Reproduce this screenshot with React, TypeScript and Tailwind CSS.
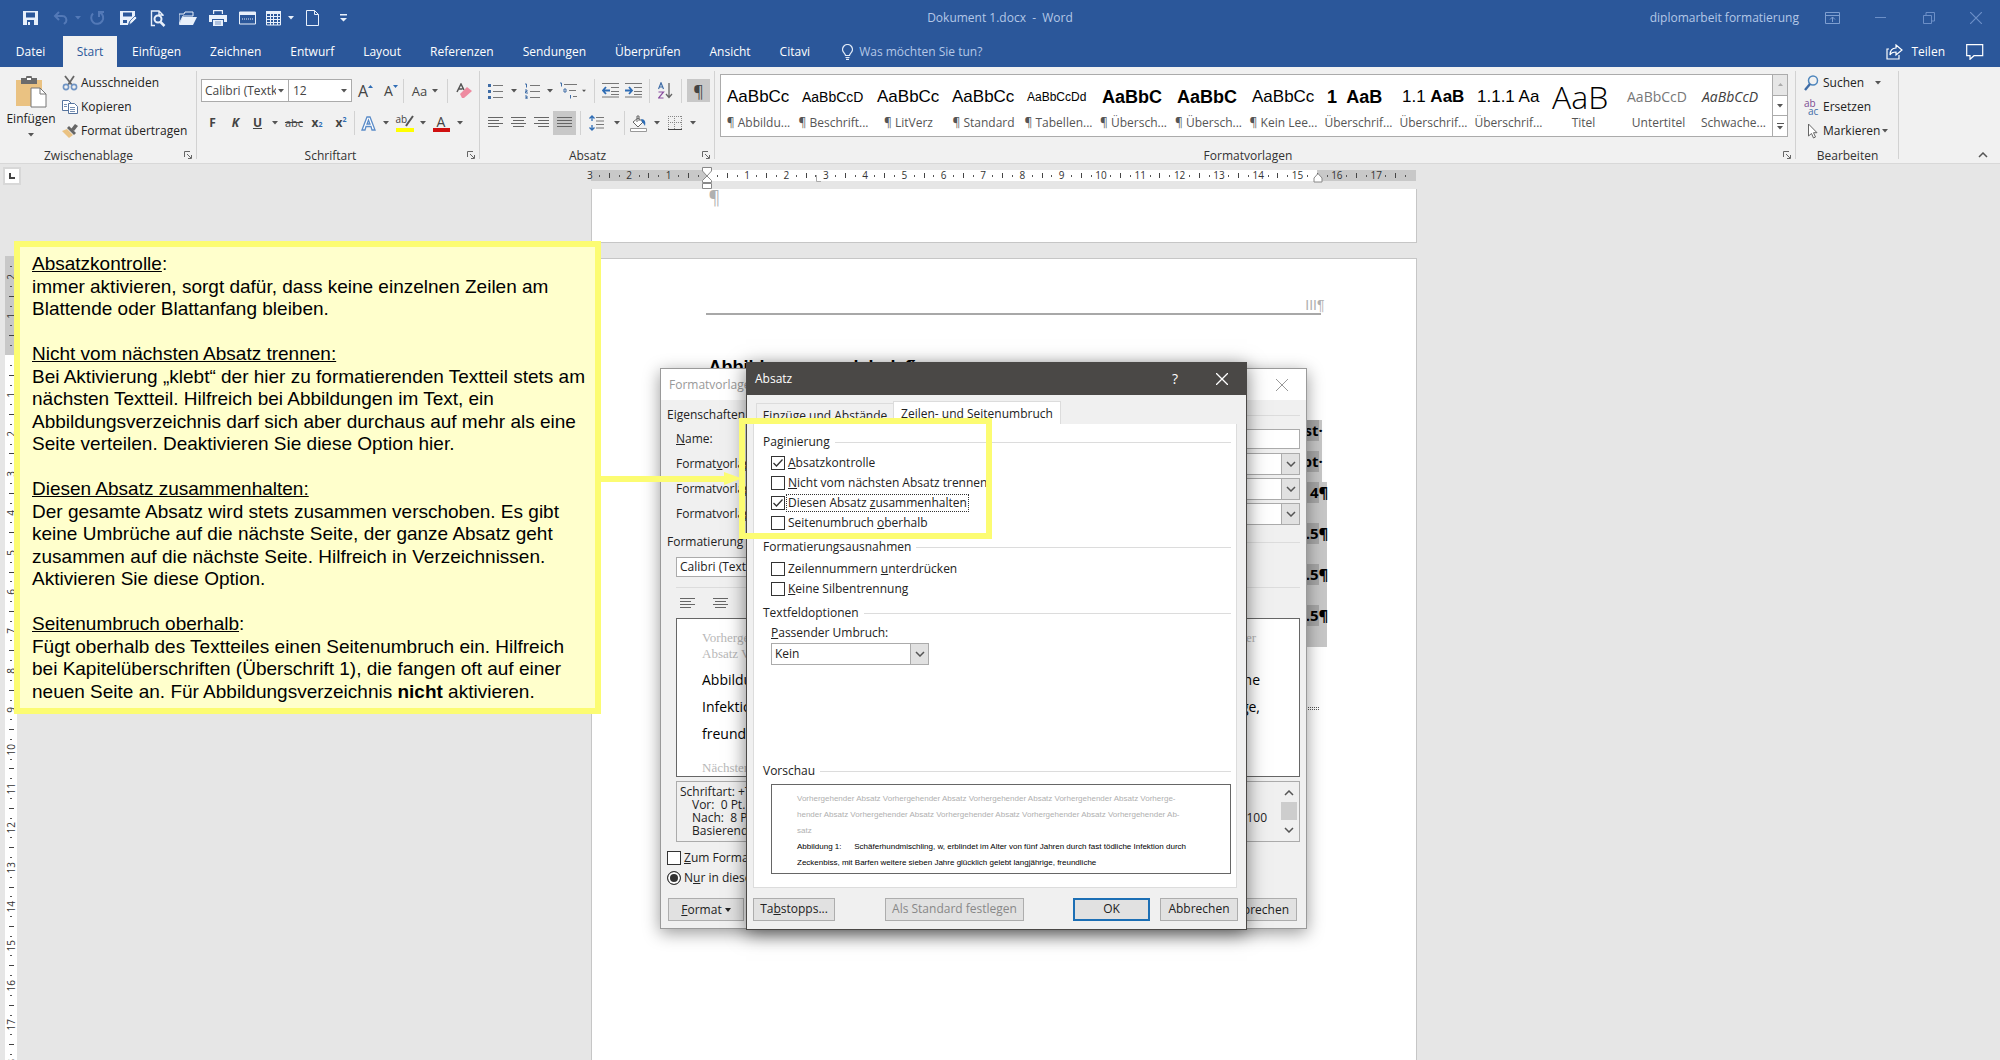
import { useState, ReactNode } from 'react';

type Tick = { key: number; label: string | null; kind: 'number' | 'dot' | 'bar' | 'zero' };

const TABS = ['Einfügen', 'Zeichnen', 'Entwurf', 'Layout', 'Referenzen', 'Sendungen', 'Überprüfen', 'Ansicht', 'Citavi'];

const STYLES = [
  { sample: 'AaBbCc', name: '¶ Abbildu...', cls: "text-black font-['Liberation_Sans'] text-[17px]" },
  { sample: 'AaBbCcD', name: '¶ Beschrift...', cls: "text-black font-['Liberation_Sans'] text-[14px]" },
  { sample: 'AaBbCc', name: '¶ LitVerz', cls: "text-black font-['Liberation_Sans'] text-[17px]" },
  { sample: 'AaBbCc', name: '¶ Standard', cls: "text-black font-['Liberation_Sans'] text-[17px]" },
  { sample: 'AaBbCcDd', name: '¶ Tabellen...', cls: "text-black font-['Liberation_Sans'] text-[12px]" },
  { sample: 'AaBbC', name: '¶ Übersch...', cls: "text-black font-['Liberation_Sans'] text-[18px] font-bold" },
  { sample: 'AaBbC', name: '¶ Übersch...', cls: "text-black font-['Liberation_Sans'] text-[18px] font-bold" },
  { sample: 'AaBbCc', name: '¶ Kein Lee...', cls: "text-black font-['Liberation_Sans'] text-[17px]" },
  { sample: '1  AaB', name: 'Überschrif...', cls: "text-black font-['Liberation_Sans'] text-[18px] font-bold" },
  { sample: '1.1 AaB', name: 'Überschrif...', cls: "text-black font-['Liberation_Sans'] text-[17px]", boldTail: true },
  { sample: '1.1.1 Aa', name: 'Überschrif...', cls: "text-black font-['Liberation_Sans'] text-[17px]" },
  { sample: 'AaB', name: 'Titel', cls: "text-black text-[32px] font-light" },
  { sample: 'AaBbCcD', name: 'Untertitel', cls: 'text-[#777] text-[14px]' },
  { sample: 'AaBbCcD', name: 'Schwache...', cls: 'text-[#404040] text-[14px] italic' }
];

// four marks per centimetre: number, dot, bar, dot
function ticks(from: number, to: number): Tick[] {
  const out: Tick[] = [];
  for (let i = from; i <= to; i++) {
    const q = ((i % 4) + 4) % 4;
    if (i === 0) out.push({ key: i, label: null, kind: 'zero' });
    else if (q === 0) out.push({ key: i, label: String(Math.abs(i / 4)), kind: 'number' });
    else out.push({ key: i, label: null, kind: q === 2 ? 'bar' : 'dot' });
  }
  return out;
}

function Caret({ className = 'w-2' }: { className?: string }) {
  return (
    <span className={`flex justify-center ${className}`}>
      <svg width="6" height="4" viewBox="0 0 6 4"><path d="M0 0h6L3 3.5z" fill="#555" /></svg>
    </span>
  );
}

function Sep() {
  return <span className="w-px h-6 bg-[#d2d2d2]" />;
}

function Tool({ label, className = '', children }: { label: string; className?: string; children: ReactNode }) {
  return (
    <button type="button" aria-label={label} className={`h-full flex items-center justify-center text-[#444] ${className}`}>
      {children}
    </button>
  );
}

function Launcher() {
  return (
    <button type="button" aria-label="Dialogfeld öffnen" className="absolute right-1 bottom-[3px] p-px">
      <svg width="8" height="8" viewBox="0 0 8 8" fill="none" stroke="#666"><path d="M.5 6V.5H6M3 3l4 4M7.500 4v3.500H4" /></svg>
    </button>
  );
}

function Group({ label, className, launcher = true, children }: { label: string; className: string; launcher?: boolean; children: ReactNode }) {
  return (
    <section aria-label={label} className={`relative flex flex-col shrink-0 ${className}`}>
      <div className="flex-1">{children}</div>
      <div className={`h-[14px] leading-[14px] text-center text-[#333] ${launcher ? 'pr-5' : ''}`}>{label}</div>
      {launcher && <Launcher />}
      <span className="absolute right-0 top-1 bottom-1 w-px bg-[#d2d2d2]" />
    </section>
  );
}

function Lines({ rows, color = '#666' }: { rows: [number, number][]; color?: string }) {
  return (
    <svg width="16" height="14" viewBox="0 0 16 14" stroke={color}>
      {rows.map(([a, b], i) => <path key={i} d={`M${a} ${i * 3 + 1.5}H${b}`} />)}
    </svg>
  );
}

function AlignIcon({ kind }: { kind: 'left' | 'center' | 'right' | 'justify' }) {
  const rows: Record<string, [number, number][]> = {
    left: [[0, 15], [0, 11], [0, 15], [0, 11]],
    center: [[0, 15], [2, 13], [0, 15], [2, 13]],
    right: [[0, 15], [4, 15], [0, 15], [4, 15]],
    justify: [[0, 15], [0, 15], [0, 15], [0, 15]]
  };
  return <Lines rows={rows[kind]} />;
}

function TitleBar() {
  return (
    <header className="grid grid-cols-3 items-center h-9 text-[#b4c7e7]">
      <div className="flex items-center pl-[23px] text-white">
        <button type="button" aria-label="Speichern" className="w-[30px]">
          <svg width="16" height="16" viewBox="0 0 16 16"><path d="M0 1h15v14H0zM3 2.500v5h9v-5zM4 10v5h7v-5z" fill="#e8f0fb" fillRule="evenodd" /><path d="M5 12h2v3H5z" fill="#e8f0fb" /></svg>
        </button>
        <button type="button" aria-label="Rückgängig" className="w-[37px] flex items-center gap-[6px]">
          <svg width="16" height="14" viewBox="0 0 16 14" fill="none" stroke="#5379b7" strokeWidth="2"><path d="M6 1L2 5l4 4M2 5h7c4 0 5 3 4 6l-2 2" /></svg>
          <svg width="6" height="4" viewBox="0 0 6 4"><path d="M0 0h6L3 3.500z" fill="#5379b7" /></svg>
        </button>
        <button type="button" aria-label="Wiederholen" className="w-[30px]">
          <svg width="15" height="16" viewBox="0 0 15 16" fill="none" stroke="#5379b7" strokeWidth="2"><path d="M3 3.500a6 6 0 1 0 7-1M9 7V2h5" /></svg>
        </button>
        <button type="button" aria-label="Speichern unter" className="w-[30px]">
          <svg width="17" height="16" viewBox="0 0 17 16"><path d="M0 1h15v5l-6 6-1 3H0zM3 2.500v4h9v-4z" fill="#e8f0fb" fillRule="evenodd" /><path d="M9 15l1-4 5-5 2 2-5 5z" fill="#e8f0fb" stroke="#2b579a" strokeWidth=".7" /><path d="M3 10h4v3H3z" fill="#2b579a" /></svg>
        </button>
        <button type="button" aria-label="Seitenansicht" className="w-[29px]">
          <svg width="16" height="17" viewBox="0 0 16 17" fill="none" stroke="#e8f0fb" strokeWidth="1.400"><path d="M5 15.500H1.500V1H9l4 4v1M9 1v4h4" /><circle cx="8" cy="9" r="3.500" fill="#2b579a" strokeWidth="2" /><path d="M10.500 12l4 4" strokeWidth="2.500" /></svg>
        </button>
        <button type="button" aria-label="Öffnen" className="w-[30px]">
          <svg width="18" height="15" viewBox="0 0 18 15"><path d="M0 13V3h5l1-2h8v4H4z" fill="none" stroke="#e8f0fb" /><path d="M3.500 6H18l-4 8H0z" fill="#e8f0fb" /></svg>
        </button>
        <button type="button" aria-label="Drucken" className="w-[30px]">
          <svg width="18" height="16" viewBox="0 0 18 16"><path d="M4 0h10v4H4zM0 5h18v7h-3V9H3v3H0zM4 10h10v6H4z" fill="#e8f0fb" /><path d="M5.500 1.500h7V4h-7zM6 12h6M6 14h6" fill="#2b579a" stroke="#2b579a" strokeWidth=".6" /></svg>
        </button>
        <button type="button" aria-label="Textfeld" className="w-[27px]">
          <svg width="17" height="14" viewBox="0 0 17 14"><path d="M.5 1v12h16V1z" fill="none" stroke="#e8f0fb" /><path d="M0 1h17v3H0z" fill="#e8f0fb" /><path d="M3 8h12" stroke="#e8f0fb" strokeDasharray="1 1" /></svg>
        </button>
        <button type="button" aria-label="Tabelle" className="w-[40px] flex items-center gap-[7px]">
          <svg width="15" height="15" viewBox="0 0 15 15"><path d="M.5 1v13h14V1zM0 5.500h15M0 8.500h15M0 11.500h15M4.500 2v12M7.500 2v12M11.500 2v12" fill="none" stroke="#e8f0fb" /><path d="M0 0h15v3H0z" fill="#e8f0fb" /></svg>
          <svg width="6" height="4" viewBox="0 0 6 4"><path d="M0 0h6L3 3.500z" fill="#e8f0fb" /></svg>
        </button>
        <button type="button" aria-label="Neu" className="w-[34px]">
          <svg width="13" height="16" viewBox="0 0 13 16" fill="none" stroke="#e8f0fb"><path d="M.5.5h8l4 4v11H.5zM8.500.5v4h4" /></svg>
        </button>
        <button type="button" aria-label="Symbolleiste anpassen">
          <svg width="7" height="8" viewBox="0 0 7 8"><path d="M0 0h7v1.500H0zM0 4h7L3.500 7.500z" fill="#e8f0fb" /></svg>
        </button>
      </div>
      <div className="text-center whitespace-pre">Dokument 1.docx  -  Word</div>
      <div className="flex items-center justify-end pr-[18px]">
        <span className="pr-[26px]">diplomarbeit formatierung</span>
        <button type="button" aria-label="Menüband-Anzeigeoptionen" className="w-[50px]">
          <svg width="15" height="12" viewBox="0 0 15 12" fill="none" stroke="#7f9fd0"><path d="M.5.5h14v11H.5zM0 3.500h15M7.500 10V5M5 7.500L7.500 5 10 7.500" /></svg>
        </button>
        <button type="button" aria-label="Minimieren" className="w-[48px]">
          <svg width="11" height="2" viewBox="0 0 11 2"><path d="M0 0h11v1H0z" fill="#6c8fc7" /></svg>
        </button>
        <button type="button" aria-label="Verkleinern" className="w-[47px]">
          <svg width="12" height="12" viewBox="0 0 12 12" fill="none" stroke="#6c8fc7"><path d="M.5 3.500h8v8h-8zM3 3V.5h8.500V9H9" /></svg>
        </button>
        <button type="button" aria-label="Schließen">
          <svg width="12" height="12" viewBox="0 0 12 12" fill="none" stroke="#6c8fc7" strokeWidth="1.200"><path d="M0 0l12 12M12 0L0 12" /></svg>
        </button>
      </div>
    </header>
  );
}

function TabBar() {
  return (
    <nav className="flex items-stretch h-[31px] pl-[2px] text-white">
      <button type="button" className="w-[61px] pr-1">Datei</button>
      <button type="button" className="w-[54px] bg-[#f1f1f1] text-[#2b579a]">Start</button>
      {TABS.map(t => <button type="button" key={t} className="pl-[15px] pr-[14px]">{t}</button>)}
      <div className="flex items-center gap-[6px] pl-[18px] text-[#b4c7e7]">
        <svg width="11" height="16" viewBox="0 0 11 16" fill="none" stroke="#dfe9f7" strokeWidth="1.200"><path d="M3.500 11.500c0-2-3-3-3-6a5 5 0 0 1 10 0c0 3-3 4-3 6zM3.500 13.500h4M4 15.300h3" /></svg>
        <span>Was möchten Sie tun?</span>
      </div>
      <div className="flex items-center ml-auto pr-4 gap-[21px]">
        <button type="button" className="flex items-center gap-2">
          <svg width="17" height="16" viewBox="0 0 17 16" fill="none" stroke="#fff" strokeWidth="1.200"><path d="M3 5H1v10h12v-4M10 1l6 5-6 5V8c-3 0-5 1-6 3 0-4 2-7 6-7z" /></svg>
          Teilen
        </button>
        <button type="button" aria-label="Kommentare">
          <svg width="18" height="16" viewBox="0 0 18 16" fill="none" stroke="#fff" strokeWidth="1.200"><path d="M.7.700h16v11H8l-4 3.600v-3.600H.7z" /></svg>
        </button>
      </div>
    </nav>
  );
}

function ClipboardGroup() {
  return (
    <Group label="Zwischenablage" className="w-[197px]">
      <div className="flex pt-1">
        <button type="button" className="flex flex-col items-center shrink-0 w-[62px] pt-[5px]">
          <svg width="31" height="32" viewBox="0 0 31 32"><path d="M0 4h26v26H0z" fill="#eac282" /><path d="M5 2h5a3 3 0 0 1 6 0h5v6H5z" fill="#6b6b6b" /><path d="M11 3h4" stroke="#fff" strokeWidth="2" /><path d="M15 12h9l6 6v13H15z" fill="#fff" stroke="#777" /><path d="M24 12v6h6" fill="none" stroke="#777" /></svg>
          <span className="leading-4 pt-[3px]">Einfügen</span>
          <Caret className="w-2 pt-[6px]" />
        </button>
        <div className="flex flex-col whitespace-nowrap">
          <button type="button" className="flex items-center gap-[3px] h-6">
            <svg width="16" height="16" viewBox="0 0 16 16" fill="none"><path d="M3 1l7 9M12 1L6 10" stroke="#666" strokeWidth="1.800" /><circle cx="4" cy="12" r="2.600" stroke="#6f94c4" strokeWidth="1.600" /><circle cx="12" cy="12" r="2.600" stroke="#6f94c4" strokeWidth="1.600" /></svg>
            Ausschneiden
          </button>
          <button type="button" className="flex items-center gap-[3px] h-6">
            <svg width="16" height="14" viewBox="0 0 16 14" stroke="#56749e"><path d="M.5.5h6l3 3v7h-9z" fill="#fff" /><path d="M6.500 3.500h6l3 3v7h-9z" fill="#fff" /><path d="M2 4.500h3M2 6.500h3M8 7.500h5M8 9.500h5M8 11.500h5" strokeWidth=".8" /></svg>
            Kopieren
          </button>
          <button type="button" className="flex items-center gap-[3px] h-6">
            <svg width="16" height="15" viewBox="0 0 16 15"><path d="M0 7l5-2 6 6-4 3z" fill="#eac282" /><path d="M5 4l2-2 7 7-2 2z" fill="#666" /><path d="M9 5l4-5 3 2-4 5z" fill="#666" /></svg>
            Format übertragen
          </button>
        </div>
      </div>
    </Group>
  );
}

function FontGroup() {
  return (
    <Group label="Schriftart" className="w-[283px] pl-1">
      <div className="flex items-center h-[23px] mt-3">
        <div className="relative w-[88px] h-full">
          <select aria-label="Schriftart" className="appearance-none w-full h-full border border-[#ababab] bg-white pl-[3px] pr-3 text-[#444]">
            <option>Calibri (Textkörper)</option>
          </select>
          <span className="absolute right-1 top-[10px] pointer-events-none"><Caret /></span>
        </div>
        <div className="relative w-[63px] h-full">
          <select aria-label="Schriftgrad" className="appearance-none w-full h-full border border-l-0 border-[#ababab] bg-white pl-1 pr-4 text-[#444]">
            <option>12</option>
          </select>
          <span className="absolute right-1 top-[10px] pointer-events-none"><Caret /></span>
        </div>
        <Tool label="Schrift vergrößern" className="w-[27px]">
          <span className="text-base">A</span>
          <svg width="5" height="12" viewBox="0 0 5 12"><path d="M0 3L2.500 0 5 3z" fill="#2f6db5" /></svg>
        </Tool>
        <Tool label="Schrift verkleinern" className="w-6">
          <span className="text-sm">A</span>
          <svg width="5" height="12" viewBox="0 0 5 12"><path d="M0 0h5L2.500 3z" fill="#2f6db5" /></svg>
        </Tool>
        <Sep />
        <Tool label="Groß-/Kleinschreibung" className="w-[43px] gap-1"><span className="text-[13px]">Aa</span><Caret /></Tool>
        <Sep />
        <Tool label="Formatierung löschen" className="w-8">
          <svg width="17" height="16" viewBox="0 0 17 16"><path d="M1 9L5 1l3 6M2.500 6h4" fill="none" stroke="#555" strokeWidth="1.500" /><path d="M4 11l7-7 5 4-8 7H6z" fill="#ee8ba0" /></svg>
        </Tool>
      </div>
      <div className="flex items-center h-6 mt-[9px]">
        <Tool label="Fett" className="w-[23px] font-bold">F</Tool>
        <Tool label="Kursiv" className="w-[23px] font-bold italic">K</Tool>
        <Tool label="Unterstrichen" className="w-[21px] font-bold underline">U</Tool>
        <Caret className="w-[14px]" />
        <Tool label="Durchgestrichen" className="w-6 text-[11px] line-through">abc</Tool>
        <Tool label="Tiefgestellt" className="w-[22px] font-bold">x<sub className="text-[7px] text-[#2f6db5]">2</sub></Tool>
        <Tool label="Hochgestellt" className="w-[26px] font-bold">x<sup className="text-[7px] text-[#2f6db5]">2</sup></Tool>
        <Sep />
        <Tool label="Texteffekte" className="w-[27px]">
          <svg width="15" height="15" viewBox="0 0 15 15" fill="#fff" stroke="#5b8cc8" strokeWidth="1.300"><path d="M1 14L6 1h3l5 13h-3l-1-3.500H5L4 14zM6 8h3L7.500 4z" /></svg>
        </Tool>
        <Caret />
        <Tool label="Texthervorhebungsfarbe" className="w-[29px]">
          <span className="relative flex h-[18px] w-[18px] border-b-4 border-[#ffff00] text-[10px] leading-[11px]">ab
            <svg className="absolute right-0 top-0" width="9" height="13" viewBox="0 0 9 13"><path d="M8 2L3 9l-2 3" stroke="#555" strokeWidth="2" /></svg>
          </span>
        </Tool>
        <Caret />
        <Tool label="Schriftfarbe" className="w-7">
          <span className="h-[17px] w-[17px] border-b-4 border-[#d01010] text-center text-sm leading-[13px]">A</span>
        </Tool>
        <Caret className="w-[10px]" />
      </div>
    </Group>
  );
}

function ParagraphGroup() {
  return (
    <Group label="Absatz" className="w-[235px]">
      <div className="flex items-center h-[23px] mt-3">
        <Tool label="Aufzählungszeichen" className="w-[30px]">
          <svg width="15" height="16" viewBox="0 0 15 16"><path d="M5 2.500h10M5 8.500h10M5 14.500h10" stroke="#777" /><path d="M0 1h3v3H0zM0 7h3v3H0zM0 13h3v3H0z" fill="#3f6ca6" /></svg>
        </Tool>
        <Caret />
        <Tool label="Nummerierung" className="w-7">
          <svg width="15" height="16" viewBox="0 0 15 16"><path d="M5 2.500h10M5 8.500h10M5 14.500h10" stroke="#777" /><path d="M0 1h1.500v3.500M0 7h2v1.500H.5V10H3M0 13h2v3H0M.5 14.500H2" fill="none" stroke="#3f6ca6" /></svg>
        </Tool>
        <Caret />
        <Tool label="Liste mit mehreren Ebenen" className="w-7">
          <svg width="17" height="17" viewBox="0 0 17 17"><path d="M4 2.500h13M9 8.500h7M13 14.500h4" stroke="#777" /><path d="M0 1h1.500v3.500M4 7h2v3H4zM10.500 13v3.500" fill="none" stroke="#3f6ca6" /></svg>
        </Tool>
        <Caret className="w-[12px] pr-2" />
        <Sep />
        <Tool label="Einzug verkleinern" className="w-[30px]">
          <svg width="17" height="15" viewBox="0 0 17 15"><path d="M0 .5h17M9 4.500h8M9 8.500h8M0 14h17M9 11.500h8" stroke="#777" /><path d="M8 7.500H1M4 4L1 7.500 4 11" fill="none" stroke="#2f6db5" strokeWidth="1.800" /></svg>
        </Tool>
        <Tool label="Einzug vergrößern" className="w-6 pr-2">
          <svg width="17" height="15" viewBox="0 0 17 15" className="shrink-0"><path d="M0 .5h17M9 4.500h8M9 8.500h8M0 14h17M9 11.500h8" stroke="#777" /><path d="M0 7.500h7M4 4l3 3.500L4 11" fill="none" stroke="#2f6db5" strokeWidth="1.800" /></svg>
        </Tool>
        <Sep />
        <Tool label="Sortieren" className="w-[31px]">
          <svg width="15" height="17" viewBox="0 0 15 17" fill="none"><path d="M.5 7L3 .8 5.500 7M1.500 5h3" stroke="#3f6ca6" strokeWidth="1.200" /><path d="M.5 10h5L.5 16h5" stroke="#8a4ea0" strokeWidth="1.200" /><path d="M11 1v14M8 12l3 3.500 3-3.500" stroke="#666" strokeWidth="1.300" /></svg>
        </Tool>
        <Sep />
        <Tool label="Alle anzeigen" className="w-[23px] ml-[5px] bg-[#c8c8c8] text-base">¶</Tool>
      </div>
      <div className="flex items-center h-6 mt-[9px] pl-1">
        <Tool label="Linksbündig" className="w-[23px]"><AlignIcon kind="left" /></Tool>
        <Tool label="Zentriert" className="w-[23px]"><AlignIcon kind="center" /></Tool>
        <Tool label="Rechtsbündig" className="w-[23px]"><AlignIcon kind="right" /></Tool>
        <Tool label="Blocksatz" className="w-[23px] mr-1 bg-[#c8c8c8]"><AlignIcon kind="justify" /></Tool>
        <Sep />
        <Tool label="Zeilenabstand" className="w-8">
          <svg width="16" height="16" viewBox="0 0 16 16" fill="none"><path d="M7 2.500h8M7 6h8M7 9.500h8M7 13h8" stroke="#777" /><path d="M3 1v5M3 10v5M.5 3.500L3 1l2.500 2.500M.5 12.500L3 15l2.500-2.500" stroke="#2f6db5" strokeWidth="1.300" /></svg>
        </Tool>
        <Caret className="w-[11px] pr-[3px]" />
        <Sep />
        <Tool label="Schattierung" className="w-7">
          <svg width="18" height="17" viewBox="0 0 18 17"><path d="M3 7l5-4 5 4-5 5z" fill="#fff" stroke="#666" /><path d="M7 7V1h2v5" fill="none" stroke="#666" /><path d="M11 4c4 0 5 3 4 7-1-2-2-3-3-4z" fill="#2f6db5" /><path d="M.5 13.500h16v3H.5z" fill="#fff" stroke="#999" /></svg>
        </Tool>
        <Caret />
        <Tool label="Rahmen" className="w-7">
          <svg width="14" height="14" viewBox="0 0 14 14" fill="none" stroke="#888" strokeDasharray="1 1"><path d="M.5 0v13M13.500 0v13M0 .5h14M6.500 0v13M0 6.500h14" /><path d="M0 13.500h14" stroke="#444" strokeDasharray="none" /></svg>
        </Tool>
        <Caret />
      </div>
    </Group>
  );
}

function StylesGroup() {
  return (
    <Group label="Formatvorlagen" className="w-[1081px] pl-[5px]">
      <div className="flex h-[63px] mt-[7px] mr-2 border border-[#ababab] bg-white">
        <div className="flex flex-1">
          {STYLES.map((s, i) => (
            <button type="button" key={i} className="flex flex-col w-[75px] px-[6px]">
              <span className={`flex items-center h-[44px] whitespace-pre ${s.cls}`}>
                {s.boldTail ? <>1.1 <b>AaB</b></> : s.sample}
              </span>
              <span className="-mx-2 self-stretch text-center leading-4 -mt-[4px] whitespace-nowrap text-[#555]">{s.name}</span>
            </button>
          ))}
        </div>
        <div className="flex flex-col w-[15px] border-l border-[#ababab]">
          <button type="button" aria-label="Nach oben" className="flex-1 flex items-center justify-center bg-[#e6e6e6]"><svg width="5" height="3"><path d="M0 3L2.500 0 5 3z" fill="#aaa" /></svg></button>
          <button type="button" aria-label="Nach unten" className="flex-1 flex items-center justify-center border-y border-[#ababab]"><Caret /></button>
          <button type="button" aria-label="Weitere" className="flex-1 flex flex-col items-center justify-center gap-[2px]"><span className="w-[7px] h-px bg-[#555]" /><Caret /></button>
        </div>
      </div>
    </Group>
  );
}

function EditGroup() {
  return (
    <Group label="Bearbeiten" className="w-[103px]" launcher={false}>
      <div className="flex flex-col items-start pt-1 pl-2">
        <button type="button" className="flex items-center gap-[4px] h-6">
          <svg width="15" height="16" viewBox="0 0 15 16" fill="none"><circle cx="9" cy="5.500" r="4.500" stroke="#4e86bd" strokeWidth="1.500" /><path d="M6 9l-5 6" stroke="#3f6ca6" strokeWidth="2.400" /></svg>
          Suchen <Caret className="w-5" />
        </button>
        <button type="button" className="flex items-center gap-[4px] h-6">
          <span className="w-[15px] h-4 text-[10px] leading-[8px] text-left">
            <span className="block text-[#7d4b92]">ab</span>
            <span className="block pl-1 text-[#3f6ca6]">ac</span>
          </span>
          Ersetzen
        </button>
        <button type="button" className="flex items-center gap-[4px] h-6">
          <svg width="15" height="16" viewBox="0 0 15 16"><path d="M4.500 1v12l3-2.500 2 4.500 2-1-2-4.300h3.500z" fill="#fff" stroke="#666" /></svg>
          <span className="flex items-center gap-px">Markieren <Caret /></span>
        </button>
      </div>
    </Group>
  );
}

function HorizontalRuler() {
  return (
    <div className="relative w-[825px] h-[11px] flex">
      <span className="w-[116px] bg-[#c8c8c8]" />
      <span className="w-[610px] bg-white" />
      <span className="flex-1 bg-[#c8c8c8]" />
      <div className="absolute -left-[6px] top-0 w-[826px] h-full flex text-[10px] leading-[11px] text-[#333]">
        {ticks(-12, 71).map(t => (
          <span key={t.key} className="flex-1 basis-0 min-w-0 flex items-center justify-center">
            {t.label ?? (t.kind === 'zero' ? null : <i className={t.kind === 'bar' ? 'shrink-0 w-px h-[5px] bg-[#444]' : 'shrink-0 w-px h-[2px] bg-[#555]'} />)}
          </span>
        ))}
      </div>
      <svg className="absolute left-[111px] -top-[3px]" width="11" height="23" viewBox="0 0 11 23" fill="#fff" stroke="#888">
        <path d="M.5.5h9V4L5 9 .5 4zM5 9l4.500 4.500v2h-9v-2zM.5 16.500h9v5h-9z" />
      </svg>
      <svg className="absolute left-[722px] top-[3px]" width="10" height="10" viewBox="0 0 10 10" fill="#fff" stroke="#888"><path d="M5 .5L9 5v4H1V5z" /></svg>
      <svg className="absolute left-[225px] top-[5px]" width="6" height="7" viewBox="0 0 6 7" fill="none" stroke="#aaa"><path d="M.5 0v6.500H5" /></svg>
    </div>
  );
}

function VerticalRuler() {
  return (
    <div className="relative w-3 flex-1 overflow-hidden bg-white">
      <div className="h-[99px] bg-[#c8c8c8]" />
      <div className="absolute left-0 top-[6px] h-[847px] w-full flex flex-col text-[10px] leading-3 text-[#333]">
        {ticks(-9, 76).map(t => (
          <span key={t.key} className="flex-1 basis-0 min-h-0 flex items-center justify-center">
            {t.label
              ? <span className="[writing-mode:vertical-rl] rotate-180">{t.label}</span>
              : t.kind !== 'zero' && <i className={t.kind === 'bar' ? 'shrink-0 h-px w-[5px] bg-[#444]' : 'shrink-0 h-px w-[2px] bg-[#555]'} />}
          </span>
        ))}
      </div>
    </div>
  );
}

const TOC = [
  { text: 'st', mark: '·', cls: 'h-[31px]', wide: 'w-[60px] mr-[5px]' },
  { text: 'pt', mark: '·', cls: 'h-[31px]', wide: 'w-[60px] mr-[5px]' },
  { text: '4', mark: '¶', cls: 'h-[41px]', wide: 'w-[65px]' },
  { text: '.5', mark: '¶', cls: 'h-[41px]', wide: 'w-[65px]' },
  { text: '.5', mark: '¶', cls: 'h-[41px]', wide: 'w-[65px]' },
  { text: '.5', mark: '¶', cls: 'h-[42px]', wide: 'w-[65px]' }
];

function DocumentPages() {
  return (
    <div className="flex flex-col flex-1 w-[826px]">
      <div className="h-[54px] bg-white border border-t-0 border-[#c6c6c6] pl-[117px] text-[#b0b0b0] text-lg leading-4">¶</div>
      <article className="flex-1 mt-[15px] bg-white border border-b-0 border-[#c6c6c6] font-['Liberation_Sans',Arial,sans-serif]">
        <div className="ml-[114px] mr-[95px] pt-[36px] border-b-2 border-[#a8a8a8] h-[56px] text-right text-[#b0b0b0] text-sm"><span className="-mr-1">III¶</span></div>
        <h1 className="ml-[117px] mt-10 text-[18px] leading-6 font-bold text-black">Abbildungsverzeichnis¶</h1>
        <div className="flex flex-col items-end mt-[41px] mr-[89px] text-[15px] font-bold text-black font-['Open_Sans']">
          {TOC.map((r, i) => (
            <div key={i} className={`flex items-start justify-end bg-[#c6c6c6] leading-[21px] ${r.wide} ${r.cls}`}>
              <span className="w-10 text-right bg-[#a6a6a6]">{r.text}</span>
              <span className={r.mark === '¶' ? 'w-2' : 'w-[3px]'}>{r.mark}</span>
            </div>
          ))}
        </div>
        <div className="ml-auto mr-[97px] mt-[60px] w-[60px] h-[3px] border-y border-dotted border-[#555]" />
      </article>
    </div>
  );
}

function Chevron({ up = false, color = '#555' }: { up?: boolean; color?: string }) {
  return (
    <svg width="10" height="6" viewBox="0 0 10 6" fill="none" stroke={color} strokeWidth="1.500"><path d={up ? 'M1 5l4-4 4 4' : 'M1 1l4 4 4-4'} /></svg>
  );
}

function DropDown({ label, value, className }: { label: string; value: string; className: string }) {
  return (
    <div className={`relative ${className}`}>
      <select id={label} aria-label={label} className="appearance-none w-full h-full bg-white border border-[#ababab] pl-[3px] text-[#222]">
        <option>{value}</option>
      </select>
      <span className="absolute right-0 inset-y-0 w-[19px] flex items-center justify-center bg-[#e1e1e1] border border-[#ababab] pointer-events-none"><Chevron /></span>
    </div>
  );
}

function Check({ checked = false, focused = false, children }: { checked?: boolean; focused?: boolean; children: ReactNode }) {
  const [on, setOn] = useState(checked);
  return (
    <label className="flex items-center h-5">
      <span className="relative flex mr-[2px]">
        <input type="checkbox" checked={on} onChange={e => setOn(e.target.checked)} className="appearance-none size-[14px] bg-white border border-[#333]" />
        {on && <svg className="absolute left-[2px] top-[3px] pointer-events-none" width="10" height="8" viewBox="0 0 10 8" fill="none" stroke="#333" strokeWidth="1.300"><path d="M.5 4l3 3 6-6.500" /></svg>}
      </span>
      <span className={focused ? 'px-px leading-4 outline outline-dotted outline-1 outline-[#333]' : 'px-px leading-4'}>{children}</span>
    </label>
  );
}

function Legend({ children }: { children: ReactNode }) {
  return (
    <h3 className="flex items-center gap-[5px] h-5 whitespace-nowrap">{children}<span className="flex-1 h-px bg-[#dcdcdc]" /></h3>
  );
}

const DIALOG_BUTTON = 'h-[23px] bg-[#e1e1e1] border border-[#adadad] whitespace-nowrap';

function StyleDialog() {
  return (
    <div role="dialog" aria-label="Formatvorlage ändern" className="absolute left-[660px] top-[368px] w-[647px] h-[561px] flex flex-col bg-[#f0f0f0] border border-[#9a9a9a] shadow-[0_4px_16px_rgba(0,0,0,0.4)]">
      <div className="flex items-center justify-between h-[31px] pl-2 pr-[18px] bg-white text-[#999]">
        <span>Formatvorlage ändern</span>
        <button type="button" aria-label="Schließen"><svg width="12" height="12" viewBox="0 0 12 12" stroke="#999"><path d="M0 0l12 12M12 0L0 12" /></svg></button>
      </div>
      <div className="px-[6px] pt-[5px]">
        <Legend>Eigenschaften</Legend>
        <div className="pl-[9px] pt-px flex flex-col">
          <label className="flex items-center justify-between h-[25px]"><span><u>N</u>ame:</span><input defaultValue="" className="w-[400px] h-5 bg-white border border-[#ababab]" /></label>
          <div className="flex items-center justify-between h-[25px]"><span>Format<u>v</u>orlagentyp:</span><DropDown label="Formatvorlagentyp" value="" className="w-[400px] h-[22px]" /></div>
          <div className="flex items-center justify-between h-[25px]"><span>Formatvorlage basiert auf:</span><DropDown label="Formatvorlage basiert auf" value="" className="w-[400px] h-[22px]" /></div>
          <div className="flex items-center justify-between h-[26px]"><span>Formatvorlage für folgenden Absatz:</span><DropDown label="Formatvorlage für folgenden Absatz" value="" className="w-[400px] h-[22px]" /></div>
        </div>
        <div className="pt-[5px]"><Legend>Formatierung</Legend></div>
        <div className="pl-[9px]">
          <DropDown label="Schriftart der Vorlage" value="Calibri (Textkörper)" className="w-[160px] h-5 mt-[5px]" />
          <div className="h-px mt-[10px] bg-[#dcdcdc]" />
          <div className="flex gap-[17px] pl-1 pt-[9px] h-[30px]"><AlignIcon kind="left" /><AlignIcon kind="center" /></div>
          <div className="flex flex-col h-[159px] border border-[#666] bg-white overflow-hidden pl-[25px] pr-[39px] text-[15px] text-black">
            <div className="flex justify-between pt-[11px] font-['Liberation_Serif',serif] text-[13px] leading-4 text-[#b8b8b8]"><span>Vorhergehender Absatz</span><span className="-mr-[10px] w-[24px]">er</span></div>
            <div className="font-['Liberation_Serif',serif] text-[13px] leading-4 text-[#b8b8b8]">Absatz Vorhergehender</div>
            <div className="flex justify-between leading-[27px] pt-1 text-sm"><span>Abbildung 1:</span><span>tödliche</span></div>
            <div className="flex justify-between leading-[27px] text-sm"><span>Infektion durch</span><span>langjährige,</span></div>
            <div className="leading-[27px] text-sm">freundliche</div>
            <div className="font-['Liberation_Serif',serif] text-[13px] leading-4 pt-[13px] text-[#b8b8b8]">Nächster Absatz</div>
          </div>
          <div className="relative mt-1 h-[61px] border border-[#ababab] pl-[3px] pt-[3px] leading-[13px] overflow-hidden">
            <div>Schriftart: +Textkörper</div>
            <div className="pl-3 whitespace-pre">Vor:  0 Pt.</div>
            <div className="pl-3 pr-8 flex justify-between whitespace-pre"><span>Nach:  8 Pt.</span><span>100</span></div>
            <div className="pl-3">Basierend auf</div>
            <div className="absolute right-[2px] inset-y-1 w-4 flex flex-col items-center pt-1">
              <Chevron up />
              <span className="w-full h-[18px] mt-[6px] mb-[7px] bg-[#cdcdcd]" />
              <Chevron />
            </div>
          </div>
        </div>
        <div className="pt-[6px]"><Check><u>Z</u>um Formatvorlagenkatalog hinzufügen</Check></div>
        <label className="flex items-center h-5 gap-[3px]">
          <input type="radio" name="scope" defaultChecked className="appearance-none size-[14px] rounded-full border border-[#333] bg-[#333] shadow-[inset_0_0_0_2px_#fff]" />
          <span>N<u>u</u>r in diesem Dokument</span>
        </label>
        <div className="flex justify-between pl-px pr-[3px] pt-[10px]">
          <button type="button" className={`${DIALOG_BUTTON} w-[76px] flex items-center justify-center gap-[3px]`}><span><u>F</u>ormat</span><svg width="6" height="4"><path d="M0 0h6L3 4z" fill="#222" /></svg></button>
          <button type="button" className={`${DIALOG_BUTTON} w-[77px]`}>Abbrechen</button>
        </div>
      </div>
    </div>
  );
}

function ParagraphDialog() {
  return (
    <div role="dialog" aria-label="Absatz" className="absolute left-[746px] top-[362px] w-[501px] h-[568px] flex flex-col bg-[#f0f0f0] border border-[#4a4846] shadow-[0_4px_18px_rgba(0,0,0,0.5)]">
      <div className="flex items-center h-8 pl-2 pr-[18px] bg-[#4a4846] text-white">
        <span className="flex-1">Absatz</span>
        <button type="button" aria-label="Hilfe" className="w-[82px] text-sm">?</button>
        <button type="button" aria-label="Schließen"><svg width="12" height="12" viewBox="0 0 12 12" stroke="#fff" strokeWidth="1.300"><path d="M0 0l12 12M12 0L0 12" /></svg></button>
      </div>
      <div role="tablist" className="flex items-end h-[29px] pl-[9px]">
        <button type="button" role="tab" className="w-[137px] h-[21px] pt-[3px] border-t border-l border-[#dcdcdc]">Einzüge und Abstände</button>
        <button type="button" role="tab" aria-selected className="w-[168px] h-[23px] pt-[2px] bg-white border border-b-0 border-[#dcdcdc]">Zeilen- und Seitenumbruch</button>
      </div>
      <div className="flex-1 ml-[6px] mr-[9px] pl-[9px] pr-[5px] pt-2 bg-white border border-t-0 border-[#dcdcdc]">
        <Legend>Paginierung</Legend>
        <div className="pl-2 pt-[1px]">
          <Check checked><u>A</u>bsatzkontrolle</Check>
          <Check><u>N</u>icht vom nächsten Absatz trennen</Check>
          <Check checked focused>Diesen Absatz <u>z</u>usammenhalten</Check>
          <Check>Seitenumbruch <u>o</u>berhalb</Check>
        </div>
        <div className="pt-1"><Legend>Formatierungsausnahmen</Legend></div>
        <div className="pl-2 pt-[2px]">
          <Check>Zeilennummern <u>u</u>nterdrücken</Check>
          <Check><u>K</u>eine Silbentrennung</Check>
        </div>
        <div className="pt-1"><Legend>Textfeldoptionen</Legend></div>
        <div className="pl-2 pt-px">
          <label htmlFor="Passender Umbruch" className="block h-[19px] leading-[18px]"><u>P</u>assender Umbruch:</label>
          <DropDown label="Passender Umbruch" value="Kein" className="w-[158px] h-[22px]" />
        </div>
        <div className="pt-24"><Legend>Vorschau</Legend></div>
        <div className="ml-2 mt-[3px] h-[90px] border border-[#666] pl-[25px] pr-[44px] pt-[6px] font-['Liberation_Sans',Arial,sans-serif] text-[8px] leading-4 text-[#b0b0b0] whitespace-nowrap">
          <div>Vorhergehender Absatz Vorhergehender Absatz Vorhergehender Absatz Vorhergehender Absatz Vorherge-</div>
          <div>hender Absatz Vorhergehender Absatz Vorhergehender Absatz Vorhergehender Absatz Vorhergehender Ab-</div>
          <div>satz</div>
          <div className="flex text-black"><span className="w-[58px]">Abbildung 1:</span>Schäferhundmischling, w, erblindet im Alter von fünf Jahren durch fast tödliche Infektion durch</div>
          <div className="text-black">Zeckenbiss, mit Barfen weitere sieben Jahre glücklich gelebt langjährige, freundliche</div>
        </div>
      </div>
      <div className="flex items-center h-[41px] pl-[6px] pr-2 pt-px">
        <button type="button" className={`${DIALOG_BUTTON} w-[82px]`}>Ta<u>b</u>stopps...</button>
        <button type="button" disabled className={`${DIALOG_BUTTON} w-[139px] ml-[50px] text-[#888]`}>Als Standard festlegen</button>
        <button type="button" className="h-[23px] w-[77px] ml-auto bg-[#e1e1e1] border-2 border-[#1c6fb5] leading-none">OK</button>
        <button type="button" className={`${DIALOG_BUTTON} w-[78px] ml-[10px]`}>Abbrechen</button>
      </div>
    </div>
  );
}

function Note() {
  return (
    <aside className="absolute left-[14px] top-[241px] w-[587px] border-[6px] border-[#fcfc72] bg-[#ffffcc] pl-3 pr-1 pt-[6px] pb-[5px] font-['Liberation_Sans',Arial,sans-serif] text-[19px] leading-[1.185] whitespace-nowrap text-black">
      <p><u>Absatzkontrolle</u>:<br />immer aktivieren, sorgt dafür, dass keine einzelnen Zeilen am<br />Blattende oder Blattanfang bleiben.</p>
      <br />
      <p><u>Nicht vom nächsten Absatz trennen:</u><br />Bei Aktivierung „klebt“ der hier zu formatierenden Textteil stets am<br />nächsten Textteil. Hilfreich bei Abbildungen im Text, ein<br />Abbildungsverzeichnis darf sich aber durchaus auf mehr als eine<br />Seite verteilen. Deaktivieren Sie diese Option hier.</p>
      <br />
      <p><u>Diesen Absatz zusammenhalten:</u><br />Der gesamte Absatz wird stets zusammen verschoben. Es gibt<br />keine Umbrüche auf die nächste Seite, der ganze Absatz geht<br />zusammen auf die nächste Seite. Hilfreich in Verzeichnissen.<br />Aktivieren Sie diese Option.</p>
      <br />
      <p><u>Seitenumbruch oberhalb</u>:<br />Fügt oberhalb des Textteiles einen Seitenumbruch ein. Hilfreich<br />bei Kapitelüberschriften (Überschrift 1), die fangen oft auf einer<br />neuen Seite an. Für Abbildungsverzeichnis <b>nicht</b> aktivieren.</p>
    </aside>
  );
}

export default function App() {
  return (
    <div className="relative flex flex-col h-screen overflow-hidden bg-[#e6e6e6] font-['Open_Sans','Noto_Sans',sans-serif] text-[12px] leading-4 text-[#222]">
      <div className="bg-[#2b579a]">
        <TitleBar />
        <TabBar />
      </div>

      {/* Ribbon */}
      <div className="relative flex h-[97px] bg-[#f1f1f1] border-b border-[#d8d8d8]">
        <ClipboardGroup />
        <FontGroup />
        <ParagraphGroup />
        <StylesGroup />
        <EditGroup />
        <button type="button" aria-label="Menüband reduzieren" className="ml-auto mt-auto mr-3 mb-[5px]"><Chevron up /></button>
      </div>

      {/* Workspace */}
      <main className="flex flex-1 min-h-0">
        <div className="flex flex-col w-5 pl-[5px] shrink-0">
          <div className="size-[14px] mt-[5px] mb-[73px] bg-white outline outline-2 outline-[#d8d8d8] flex items-center justify-center">
            <svg width="6" height="6" viewBox="0 0 6 6" fill="none" stroke="#444" strokeWidth="2"><path d="M1 0v5h5" /></svg>
          </div>
          <VerticalRuler />
        </div>
        <div className="flex-1 flex flex-col items-center pr-[13px] min-h-0">
          <div className="pt-[6px] pb-2"><HorizontalRuler /></div>
          <DocumentPages />
        </div>
      </main>

      <StyleDialog />
      <ParagraphDialog />

      {/* Annotations */}
      <Note />
      <div className="absolute left-[739px] top-[418px] w-[253px] h-[121px] border-[6px] border-[#fcfc72]" />
      <svg className="absolute left-[601px] top-[472px]" width="142" height="13" viewBox="0 0 142 13" fill="#fcfc72"><path d="M0 4h123V0l18 6.500L123 13v-3H0z" /></svg>
    </div>
  );
}
